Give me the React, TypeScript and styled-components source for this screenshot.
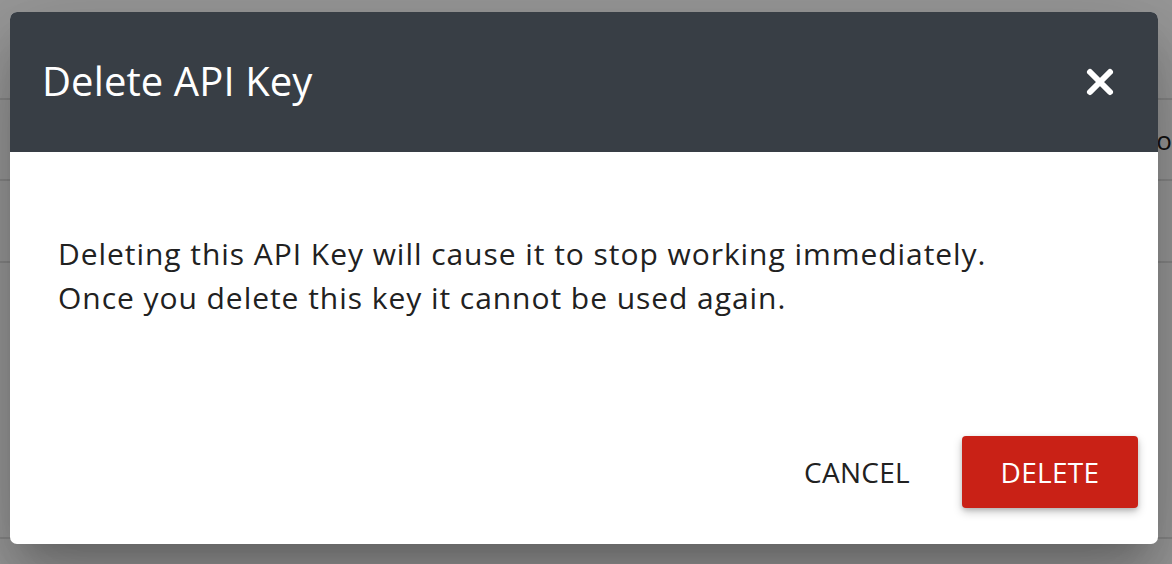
import styled, { createGlobalStyle } from 'styled-components';

const GlobalStyle = createGlobalStyle`
  * { box-sizing: border-box; }
  html, body {
    margin: 0;
    padding: 0;
    width: 1172px;
    height: 564px;
    overflow: hidden;
    background: #ffffff;
    font-family: "Open Sans", "Liberation Sans", sans-serif;
  }
`;

const Page = styled.div`
  position: relative;
  width: 1172px;
  height: 564px;
  overflow: hidden;
  background: #ffffff;
`;

const PageRow = styled.div<{ $h: number }>`
  height: ${(p) => p.$h}px;
  border-bottom: 2px solid #e2e2e2;
  display: flex;
  align-items: center;
  justify-content: flex-end;
  font-size: 26px;
  color: #212121;
`;

const RowText = styled.span`
  margin-right: 0;
`;

const Overlay = styled.div`
  position: absolute;
  inset: 0;
  background: rgba(0, 0, 0, 0.4);
  display: flex;
  align-items: flex-start;
  padding: 12px 0 0 10px;
`;

const Dialog = styled.div`
  width: 1148px;
  height: 532px;
  background: #ffffff;
  border-radius: 7px;
  overflow: hidden;
  display: flex;
  flex-direction: column;
  box-shadow: 0 22px 30px -14px rgba(0, 0, 0, 0.2),
    0 48px 76px 6px rgba(0, 0, 0, 0.14), 0 18px 92px 16px rgba(0, 0, 0, 0.12);
`;

const Header = styled.div`
  height: 140px;
  background: #383e45;
  display: flex;
  align-items: center;
  justify-content: space-between;
  padding: 0 40px 0 32px;
`;

const Title = styled.h2`
  margin: 0;
  font-size: 40px;
  font-weight: 400;
  color: #ffffff;
  letter-spacing: 0.1px;
  line-height: 1;
  padding-bottom: 2px;
`;

const CloseButton = styled.button`
  width: 36px;
  height: 36px;
  border: none;
  background: transparent;
  padding: 0;
  display: flex;
  align-items: center;
  justify-content: center;
  cursor: pointer;
`;

const Body = styled.div`
  flex: 1;
  padding: 80px 48px 0;
`;

const Message = styled.p`
  margin: 0;
  font-size: 30px;
  line-height: 44px;
  letter-spacing: 0.95px;
  color: #212121;
`;

const Footer = styled.div`
  display: flex;
  justify-content: flex-end;
  align-items: center;
  gap: 52px;
  padding: 0 20px 36px 0;
`;

const TextButton = styled.button`
  border: none;
  background: transparent;
  font-family: inherit;
  font-size: 28px;
  letter-spacing: 0.3px;
  color: #212121;
  padding: 0;
  cursor: pointer;
  text-transform: uppercase;
`;

const DangerButton = styled.button`
  width: 176px;
  height: 72px;
  border: none;
  border-radius: 4px;
  background: #c92116;
  color: #ffffff;
  font-family: inherit;
  font-size: 28px;
  letter-spacing: 0.3px;
  text-transform: uppercase;
  cursor: pointer;
  box-shadow: 0 4px 10px rgba(0, 0, 0, 0.22), 0 2px 4px rgba(0, 0, 0, 0.14);
`;

function CloseIcon() {
  return (
    <svg width="30" height="30" viewBox="0 0 30 30">
      <path
        d="M5 5 L25 25 M25 5 L5 25"
        stroke="#ffffff"
        strokeWidth="6"
        strokeLinecap="round"
      />
    </svg>
  );
}

export default function App() {
  return (
    <>
      <GlobalStyle />
      <Page>
        <PageRow $h={100} />
        <PageRow $h={81}>
          <RowText>o</RowText>
        </PageRow>
        <PageRow $h={82} />
        <PageRow $h={276} />
        <Overlay>
          <Dialog>
            <Header>
              <Title>Delete API Key</Title>
              <CloseButton aria-label="Close">
                <CloseIcon />
              </CloseButton>
            </Header>
            <Body>
              <Message>
                Deleting this API Key will cause it to stop working immediately.
                <br />
                Once you delete this key it cannot be used again.
              </Message>
            </Body>
            <Footer>
              <TextButton>Cancel</TextButton>
              <DangerButton>Delete</DangerButton>
            </Footer>
          </Dialog>
        </Overlay>
      </Page>
    </>
  );
}
